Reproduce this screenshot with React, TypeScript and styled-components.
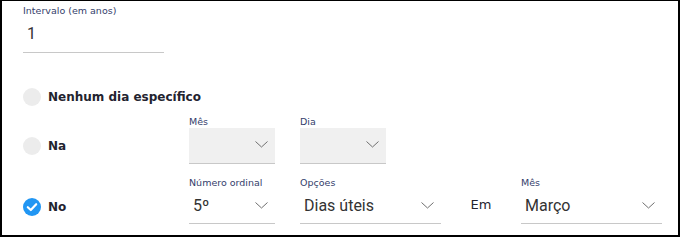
import React from 'react'
import styled, {createGlobalStyle} from 'styled-components'

const GlobalStyle = createGlobalStyle`
  html, body {
    margin: 0;
    padding: 0;
    background: #fff;
  }
  body {
    font-family: "DejaVu Sans", "Open Sans", sans-serif;
  }
`

const Frame = styled.div`
  box-sizing: border-box;
  width: 680px;
  height: 237px;
  border: 2px solid #000;
  border-top-width: 1px;
  padding: 3px 0 0 21px;
  display: flex;
  flex-direction: column;
`

const Row = styled.div<{ $gap?: number }>`
  display: flex;
  align-items: flex-end;
  margin-top: ${p => p.$gap || 0}px;
`

const Field = styled.div<{ $width: number }>`
  width: ${p => p.$width}px;
  display: flex;
  flex-direction: column;
`

const Label = styled.div`
  height: 13px;
  font-size: 9.5px;
  line-height: 13px;
  color: #34406b;
  white-space: nowrap;
`

const Control = styled.div<{ $filled?: boolean; $height: number }>`
  box-sizing: border-box;
  height: ${p => p.$height}px;
  display: flex;
  align-items: center;
  justify-content: space-between;
  padding: 0 7px 2px 4px;
  background: ${p => (p.$filled ? '#f0f0f0' : 'transparent')};
  border-bottom: 1px solid #c8c8c8;
`

const Value = styled.span`
  font-family: Roboto, "Liberation Sans", sans-serif;
  font-size: 16px;
  color: #333;
`

const RadioCell = styled.div<{ $height: number }>`
  width: 166px;
  height: ${p => p.$height}px;
  display: flex;
  align-items: center;
  gap: 7px;
  flex-shrink: 0;
  white-space: nowrap;
`

const Circle = styled.span`
  width: 18px;
  height: 18px;
  border-radius: 50%;
  background: #ececec;
  flex-shrink: 0;
`

const RadioText = styled.span`
  font-size: 12px;
  font-weight: 700;
  color: #23232f;
`

const Spacer = styled.div<{ $width: number }>`
  width: ${p => p.$width}px;
  flex-shrink: 0;
`

const Em = styled.div`
  width: 80px;
  height: 34px;
  display: flex;
  align-items: center;
  justify-content: center;
  padding-bottom: 6px;
  box-sizing: border-box;
  font-size: 13px;
  color: #23232f;
`

const Chevron = () => (
  <svg width="13" height="7" viewBox="0 0 13 7" fill="none">
    <polyline points="0.5,0.5 6.5,6 12.5,0.5" stroke="#6f6f6f" strokeWidth="1"/>
  </svg>
)

const Checked = () => (
  <svg width="18" height="18" viewBox="0 0 18 18">
    <circle cx="9" cy="9" r="9" fill="#2196f3"/>
    <polyline points="4.8,9.2 7.8,12 13.2,6.2" fill="none" stroke="#fff" strokeWidth="2.2"
              strokeLinecap="round" strokeLinejoin="round"/>
  </svg>
)

const Select = ({label, value, width, filled, height}: {
  label: string
  value?: string
  width: number
  filled?: boolean
  height: number
}) => (
  <Field $width={width}>
    <Label>{label}</Label>
    <Control $filled={filled} $height={height}>
      <Value>{value}</Value>
      <Chevron/>
    </Control>
  </Field>
)

const Radio = ({label, checked, height}: { label: string; checked?: boolean; height: number }) => (
  <RadioCell $height={height}>
    {checked ? <Checked/> : <Circle/>}
    <RadioText>{label}</RadioText>
  </RadioCell>
)

export default function App() {
  return (
    <>
      <GlobalStyle/>
      <Frame>
        <Row>
          <Field $width={141}>
            <Label>Intervalo (em anos)</Label>
            <Control $height={36}>
              <Value>1</Value>
            </Control>
          </Field>
        </Row>

        <Row $gap={26}>
          <Radio label="Nenhum dia específico" height={36}/>
        </Row>

        <Row>
          <Radio label="Na" height={36}/>
          <Select label="Mês" width={86} filled height={36}/>
          <Spacer $width={25}/>
          <Select label="Dia" width={86} filled height={36}/>
        </Row>

        <Row $gap={12}>
          <Radio label="No" checked height={34}/>
          <Select label="Número ordinal" value="5º" width={86} height={35}/>
          <Spacer $width={25}/>
          <Select label="Opções" value="Dias úteis" width={141} height={35}/>
          <Em>Em</Em>
          <Select label="Mês" value="Março" width={141} height={35}/>
        </Row>
      </Frame>
    </>
  )
}
